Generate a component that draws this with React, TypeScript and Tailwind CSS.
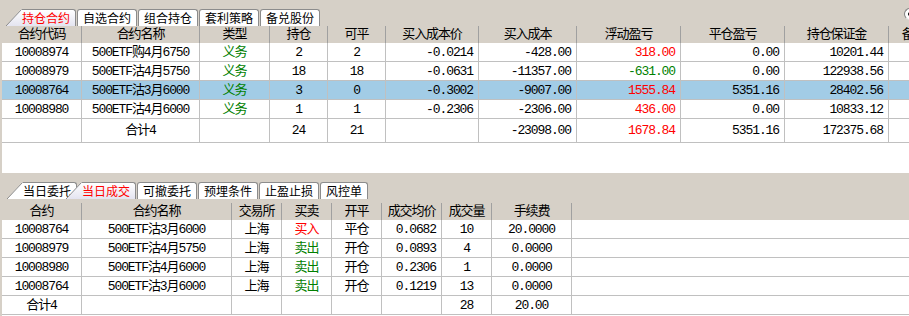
import React from "react";

type Cell = { text: string; color?: string; align?: "c" | "r" };

const UP_COLS = [80, 118, 70, 58, 58, 93, 98, 104, 104, 104, 74];
const UP_HEAD = ["合约代码", "合约名称", "类型", "持仓", "可平", "买入成本价", "买入成本", "浮动盈亏", "平仓盈亏", "持仓保证金", "备兑数量"];
const UP_ALIGN: ("c" | "r")[] = ["c", "c", "c", "c", "c", "r", "r", "r", "r", "r", "r"];

const RED = "text-[#ff0000]";
const GREEN = "text-[#008000]";

const upRows: { cells: Cell[]; selected?: boolean }[] = [
  {
    cells: [
      { text: "10008974" }, { text: "500ETF购4月6750" }, { text: "义务", color: GREEN }, { text: "2" }, { text: "2" },
      { text: "-0.0214" }, { text: "-428.00" }, { text: "318.00", color: RED }, { text: "0.00" }, { text: "10201.44" }, { text: "" },
    ],
  },
  {
    cells: [
      { text: "10008979" }, { text: "500ETF沽4月5750" }, { text: "义务", color: GREEN }, { text: "18" }, { text: "18" },
      { text: "-0.0631" }, { text: "-11357.00" }, { text: "-631.00", color: GREEN }, { text: "0.00" }, { text: "122938.56" }, { text: "" },
    ],
  },
  {
    selected: true,
    cells: [
      { text: "10008764" }, { text: "500ETF沽3月6000" }, { text: "义务", color: GREEN }, { text: "3" }, { text: "0" },
      { text: "-0.3002" }, { text: "-9007.00" }, { text: "1555.84", color: RED }, { text: "5351.16" }, { text: "28402.56" }, { text: "" },
    ],
  },
  {
    cells: [
      { text: "10008980" }, { text: "500ETF沽4月6000" }, { text: "义务", color: GREEN }, { text: "1" }, { text: "1" },
      { text: "-0.2306" }, { text: "-2306.00" }, { text: "436.00", color: RED }, { text: "0.00" }, { text: "10833.12" }, { text: "" },
    ],
  },
];

const upTotal: Cell[] = [
  { text: "" }, { text: "合计4" }, { text: "" }, { text: "24" }, { text: "21" }, { text: "" },
  { text: "-23098.00" }, { text: "1678.84", color: RED }, { text: "5351.16" }, { text: "172375.68" }, { text: "" },
];

const LO_COLS = [80, 150, 50, 50, 50, 60, 50, 80];
const LO_HEAD = ["合约", "合约名称", "交易所", "买卖", "开平", "成交均价", "成交量", "手续费"];
const LO_ALIGN: ("c" | "r")[] = ["c", "c", "c", "c", "c", "r", "c", "c"];

const loRows: Cell[][] = [
  [
    { text: "10008764" }, { text: "500ETF沽3月6000" }, { text: "上海" }, { text: "买入", color: RED },
    { text: "平仓" }, { text: "0.0682" }, { text: "10" }, { text: "20.0000" },
  ],
  [
    { text: "10008979" }, { text: "500ETF沽4月5750" }, { text: "上海" }, { text: "卖出", color: GREEN },
    { text: "开仓" }, { text: "0.0893" }, { text: "4" }, { text: "0.0000" },
  ],
  [
    { text: "10008980" }, { text: "500ETF沽4月6000" }, { text: "上海" }, { text: "卖出", color: GREEN },
    { text: "开仓" }, { text: "0.2306" }, { text: "1" }, { text: "0.0000" },
  ],
  [
    { text: "10008764" }, { text: "500ETF沽3月6000" }, { text: "上海" }, { text: "卖出", color: GREEN },
    { text: "开仓" }, { text: "0.1219" }, { text: "13" }, { text: "0.0000" },
  ],
  [
    { text: "合计4" }, { text: "" }, { text: "" }, { text: "" },
    { text: "" }, { text: "" }, { text: "28" }, { text: "20.00" },
  ],
];

function Tab({ label, active, slant, overlap }: { label: string; active?: boolean; slant?: boolean; overlap?: boolean }) {
  const bg = active ? "bg-gradient-to-b from-white to-[#e4e4f0]" : "bg-white";
  return (
    <div className={`relative flex items-end h-[17px] ${overlap ? "-ml-[12px]" : ""} ${active ? "z-10" : ""}`}>
      {slant && (
        <svg width="16" height="17" viewBox="0 0 16 17" className="block shrink-0">
          <defs>
            <linearGradient id={`g-${label}`} x1="0" y1="0" x2="0" y2="1">
              <stop offset="0" stopColor="#ffffff" />
              <stop offset="1" stopColor={active ? "#e4e4f0" : "#ffffff"} />
            </linearGradient>
          </defs>
          <polygon points="0,17 15,0.5 16,0.5 16,17" fill={`url(#g-${label})`} />
          <line x1="0" y1="17" x2="15.5" y2="0.5" stroke="#8c8c8c" strokeWidth="1" />
        </svg>
      )}
      <div
        className={`h-[17px] flex items-center ${bg} border-t border-r border-[#8c8c8c] rounded-tr-[3px] ${
          slant ? "pr-[5px]" : "border-l rounded-tl-[3px] px-[5px]"
        } ${active ? "text-[#ff0000]" : "text-black"}`}
      >
        <span className="leading-none text-[12px] tracking-normal font-['Noto_Sans_CJK_SC',sans-serif]">{label}</span>
      </div>
    </div>
  );
}

function Row({ cells, widths, aligns, h, className }: { cells: Cell[]; widths: number[]; aligns: ("c" | "r")[]; h: string; className?: string }) {
  return (
    <div className={`flex border-b border-[#c0c0c0] ${h} ${className ?? ""}`}>
      {cells.map((c, i) => (
        <div
          key={i}
          style={{ width: widths[i] }}
          className={`shrink-0 h-full flex items-center border-r border-[#c0c0c0] whitespace-nowrap ${
            aligns[i] === "r" ? "justify-end pr-[5px]" : "justify-center"
          } ${c.color ?? "text-black"}`}
        >
          {c.text}
        </div>
      ))}
    </div>
  );
}

function Header({ labels, widths }: { labels: string[]; widths: number[] }) {
  return (
    <div className="flex h-[17px]">
      {labels.map((l, i) => (
        <div
          key={i}
          style={{ width: widths[i] }}
          className="shrink-0 h-full flex items-center justify-center border-r border-[#a0a0a0] whitespace-nowrap"
        >
          {l}
        </div>
      ))}
    </div>
  );
}

export default function App() {
  return (
    <div className="relative w-[909px] h-[316px] overflow-hidden bg-[#d6d0c7] text-[13px] tracking-[-1.1px] text-black font-['Liberation_Mono','Noto_Sans_CJK_SC',monospace] leading-none">
      {/* upper tabs */}
      <div className="flex items-end h-[26px] pl-[6px] gap-[1px]">
        <Tab label="持仓合约" active slant />
        <Tab label="自选合约" />
        <Tab label="组合持仓" />
        <Tab label="套利策略" />
        <Tab label="备兑股份" />
        <div className="ml-auto self-start mt-[8px] -mr-[7px] w-[12px] h-[12px] rounded-full bg-white border border-[#808080] border-b-[#e0e0e0] border-r-[#e0e0e0] flex items-center justify-center">
          <div className="w-[4px] h-[4px] rounded-full bg-black" />
        </div>
      </div>

      {/* positions table */}
      <div className="pl-[2px]">
        <Header labels={UP_HEAD} widths={UP_COLS} />
        <div className="h-[130px] bg-white">
          {upRows.map((r, i) => (
            <Row
              key={i}
              cells={r.cells}
              widths={UP_COLS}
              aligns={UP_ALIGN}
              h="h-[19px]"
              className={r.selected ? "bg-[#a2cce6]" : ""}
            />
          ))}
          <Row cells={upTotal} widths={UP_COLS} aligns={UP_ALIGN} h="h-[24px]" />
        </div>
      </div>

      {/* lower tabs */}
      <div className="flex items-end h-[26px] pl-[7px] gap-[1px]">
        <Tab label="当日委托" slant />
        <Tab label="当日成交" active slant overlap />
        <Tab label="可撤委托" />
        <Tab label="预埋条件" />
        <Tab label="止盈止损" />
        <Tab label="风控单" />
      </div>

      {/* trades table */}
      <div className="pl-[2px] pt-[4px]">
        <Header labels={LO_HEAD} widths={LO_COLS} />
        <div className="h-[100px] bg-white">
          {loRows.map((r, i) => (
            <Row key={i} cells={r} widths={LO_COLS} aligns={LO_ALIGN} h="h-[19px]" />
          ))}
        </div>
      </div>
    </div>
  );
}
